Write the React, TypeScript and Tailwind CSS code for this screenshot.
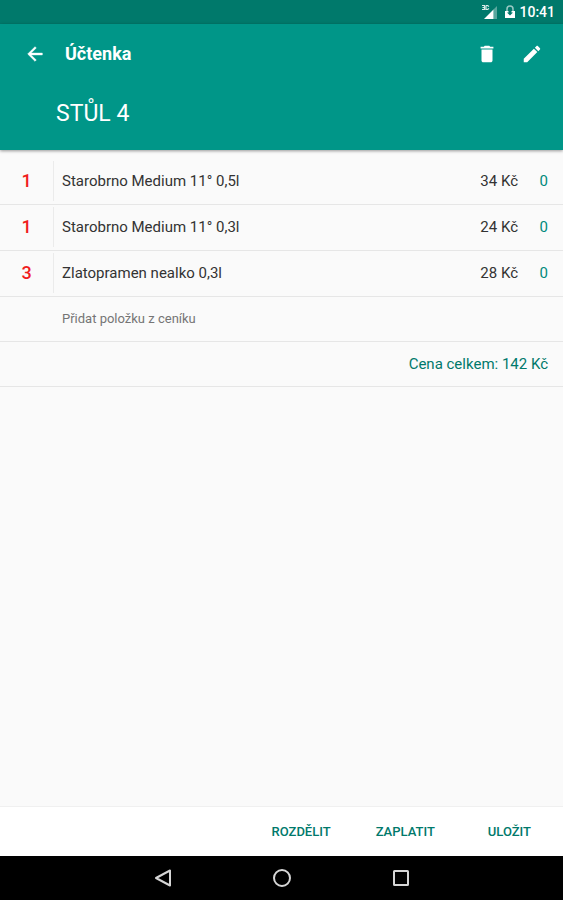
import React from 'react';

interface ReceiptItem {
  id: number;
  quantity: number;
  name: string;
  price: number;
  selected: number;
}

const items: ReceiptItem[] = [
  { id: 1, quantity: 1, name: 'Starobrno Medium 11° 0,5l', price: 34, selected: 0 },
  { id: 2, quantity: 1, name: 'Starobrno Medium 11° 0,3l', price: 24, selected: 0 },
  { id: 3, quantity: 3, name: 'Zlatopramen nealko 0,3l', price: 28, selected: 0 },
];

const total = items.reduce((sum, item) => sum + item.quantity * item.price, 0);

const StatusBar = () => (
  <div className="flex h-6 items-center justify-end bg-[#00796b] pr-2 text-white">
    <svg width="16" height="16" viewBox="0 0 16 16" className="mr-2" aria-hidden="true">
      <path d="M12.500 5.500V15H16V2z" fill="#fff" opacity="0.35" />
      <path d="M12.500 5.500V15H3z" fill="#fff" />
      <path d="M1 1.500h2.500v4H1M1.500 3.500h2M5 1.500v4h1.500L8 4.500M8 2.500L6.500 1.500H5" fill="none" stroke="#fff" strokeWidth="1.200" opacity="0.85" />
    </svg>
    <svg width="10" height="14" viewBox="0 0 10 14" className="mr-1" aria-hidden="true">
      <path d="M2 6V4a3 3 0 0 1 6 0v2" fill="none" stroke="#fff" strokeWidth="1.500" opacity="0.6" />
      <path d="M0 6h10v7H0z" fill="#fff" />
      <path d="M3.500 6h3v1.500H8L5 10.500 2 7.500h1.500z" fill="#00796b" />
    </svg>
    <span className="text-sm font-medium">10:41</span>
  </div>
);

const Header = () => (
  <header className="relative z-10 bg-[#009688] text-white shadow-[0_1px_3px_rgba(0,0,0,0.4)]">
    <div className="flex h-15 items-center pr-5 pl-6">
      <button type="button" aria-label="Zpět">
        <svg width="22" height="22" viewBox="0 0 24 24" fill="currentColor" stroke="currentColor" strokeWidth="0.500">
          <path d="M20 11H7.830l5.590-5.590L12 4l-8 8 8 8 1.410-1.410L7.830 13H20v-2z" />
        </svg>
      </button>
      <h1 className="ml-[19px] flex-1 text-lg font-bold">Účtenka</h1>
      <div className="flex items-center gap-[23px]">
        <button type="button" aria-label="Smazat">
          <svg width="22" height="22" viewBox="0 0 24 24" fill="currentColor">
            <path d="M6 19c0 1.100.9 2 2 2h8c1.100 0 2-.9 2-2V7H6v12zM19 4h-3.500l-1-1h-5l-1 1H5v2h14V4z" />
          </svg>
        </button>
        <button type="button" aria-label="Upravit">
          <svg width="22" height="22" viewBox="0 0 24 24" fill="currentColor">
            <path d="M3 17.250V21h3.750L17.810 9.940l-3.750-3.750L3 17.250zM20.710 7.040c.39-.39.39-1.020 0-1.410l-2.340-2.340c-.39-.39-1.020-.39-1.410 0l-1.830 1.830 3.750 3.750 1.830-1.830z" />
          </svg>
        </button>
      </div>
    </div>
    <h2 className="h-[66px] pt-3 pl-14 text-[23px] leading-9">STŮL 4</h2>
  </header>
);

const Receipt = () => (
  <main className="flex-1 pt-2">
    <table className="w-full text-[15px] text-[#333333]">
      <tbody>
        {items.map((item) => (
          <tr key={item.id} className="h-[46px] border-b border-[#e6e6e6]">
            <td className="w-[54px] p-0">
              <div className="flex h-10 items-center justify-center border-r border-[#ebebeb] text-lg font-medium text-[#f01c1c]">
                {item.quantity}
              </div>
            </td>
            <td className="pl-2">{item.name}</td>
            <td className="text-right">{item.price} Kč</td>
            <td className="w-[45px] pr-[15px] text-right text-[#00897b]">{item.selected}</td>
          </tr>
        ))}
      </tbody>
    </table>
    <button
      type="button"
      className="block h-[45px] w-full border-b border-[#e6e6e6] pl-[62px] text-left text-[13px] text-[#757575]"
    >
      Přidat položku z ceníku
    </button>
    <p className="h-[45px] border-b border-[#e6e6e6] pr-[15px] text-right text-[15px] leading-[45px] text-[#00796b]">
      Cena celkem: {total} Kč
    </p>
  </main>
);

const ActionBar = () => (
  <div className="flex h-[50px] items-center justify-end gap-[45px] border-t border-[#f0f0f0] bg-white pr-8 text-[13px] font-medium text-[#00796b]">
    <button type="button">ROZDĚLIT</button>
    <button type="button">ZAPLATIT</button>
    <button type="button" className="ml-2">ULOŽIT</button>
  </div>
);

const NavigationBar = () => (
  <nav className="flex h-11 items-center justify-center gap-[99px] bg-black text-[#d6d6d6]">
    <button type="button" aria-label="Zpět">
      <svg width="20" height="20" viewBox="0 0 20 20" fill="none" stroke="currentColor" strokeWidth="2">
        <path d="M17 2.500v15L3 10z" strokeLinejoin="round" />
      </svg>
    </button>
    <button type="button" aria-label="Domů">
      <svg width="20" height="20" viewBox="0 0 20 20" fill="none" stroke="currentColor" strokeWidth="2">
        <circle cx="10" cy="10" r="8" />
      </svg>
    </button>
    <button type="button" aria-label="Přehled">
      <svg width="20" height="20" viewBox="0 0 20 20" fill="none" stroke="currentColor" strokeWidth="2">
        <rect x="3" y="3" width="14" height="14" rx="0.500" />
      </svg>
    </button>
  </nav>
);

export default function App() {
  return (
    <div className="flex min-h-screen flex-col bg-[#fafafa] font-['Roboto',sans-serif]">
      <StatusBar />
      <Header />
      <Receipt />
      <ActionBar />
      <NavigationBar />
    </div>
  );
}
